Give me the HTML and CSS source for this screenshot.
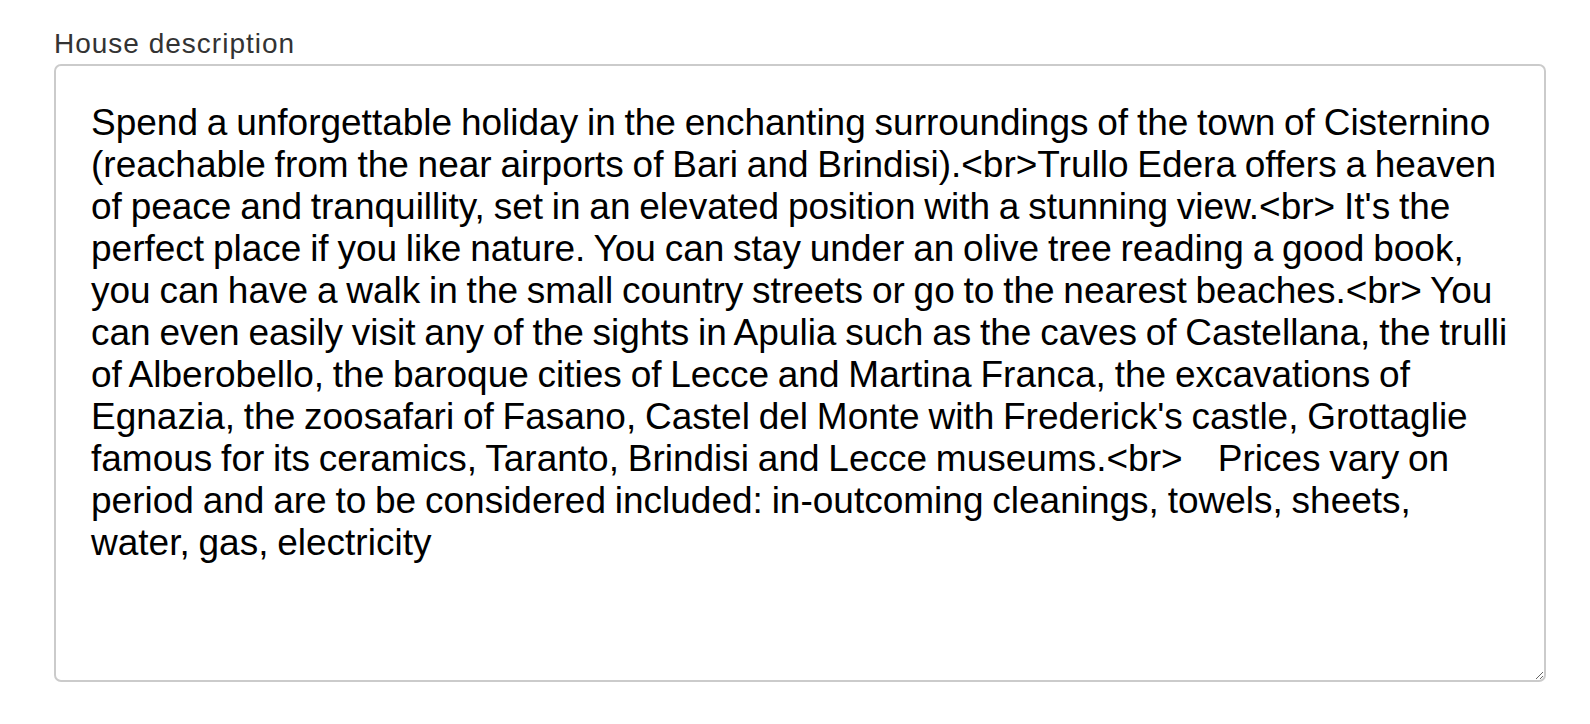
FILE: index.html
```html
<!DOCTYPE html>
<html lang="en">
<head>
<meta charset="utf-8">
<title>House description</title>
<link rel="stylesheet" href="styles.css">
</head>
<body>
<div class="field">
<label class="field-label" for="desc">House description</label>
<textarea id="desc" class="field-input">Spend a unforgettable holiday in the enchanting surroundings of the town of Cisternino (reachable from the near airports of Bari and Brindisi).&lt;br&gt;Trullo Edera offers a heaven of peace and tranquillity, set in an elevated position with a stunning view.&lt;br&gt; It's the perfect place if you like nature. You can stay under an olive tree reading a good book, you can have a walk in the small country streets or go to the nearest beaches.&lt;br&gt; You can even easily visit any of the sights in Apulia such as the caves of Castellana, the trulli of Alberobello, the baroque cities of Lecce and Martina Franca, the excavations of Egnazia, the zoosafari of Fasano, Castel del Monte with Frederick's castle, Grottaglie famous for its ceramics, Taranto, Brindisi and Lecce museums.&lt;br&gt;    Prices vary on period and are to be considered included: in-outcoming cleanings, towels, sheets, water, gas, electricity</textarea>
</div>
</body>
</html>
```
FILE: styles.css
```css
html, body {
  margin: 0;
  padding: 0;
  background: #fff;
}
body {
  font-family: "Liberation Sans", Arial, sans-serif;
}
.field {
  display: flex;
  flex-direction: column;
  padding: 27px 0 0 54px;
  width: 1492px;
}
.field-label {
  font-size: 28px;
  line-height: 34px;
  letter-spacing: 1px;
  color: #333;
  margin-bottom: 3px;
}
.field-input {
  box-sizing: border-box;
  width: 1492px;
  height: 618px;
  margin: 0;
  padding: 36px 34px 36px 35px;
  border: 2px solid #cbcbcb;
  border-radius: 7px;
  font-family: "Liberation Sans", Arial, sans-serif;
  font-size: 37px;
  line-height: 42px;
  word-spacing: -1.5px;
  color: #000;
  background: #fff;
  resize: both;
  outline: none;
}
```
